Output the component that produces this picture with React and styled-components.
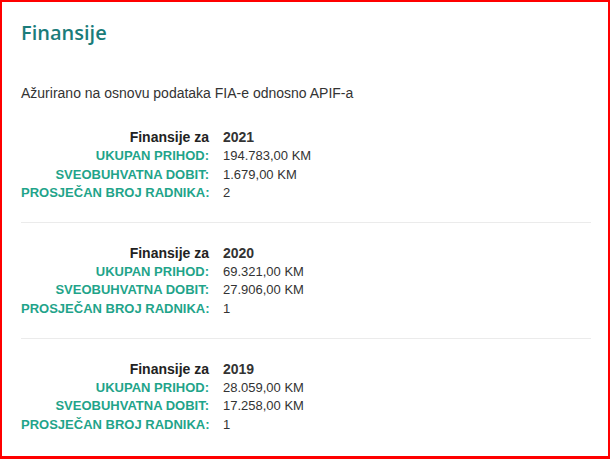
import React from "react";
import styled, { createGlobalStyle } from "styled-components";

const GlobalStyle = createGlobalStyle`
  html, body {
    margin: 0;
    padding: 0;
    background: #ffffff;
  }
  body {
    font-family: "Liberation Sans", Arial, sans-serif;
  }
`;

const Frame = styled.div`
  width: 610px;
  height: 459px;
  box-sizing: border-box;
  border: 2px solid #ff0000;
  border-bottom-width: 3px;
  padding: 17px 17px 0 19px;
  overflow: hidden;
  background: #ffffff;
`;

const Title = styled.h2`
  margin: 0;
  font-family: "Open Sans", sans-serif;
  font-weight: 600;
  font-size: 20px;
  line-height: 28px;
  color: #1a7c7a;
`;

const Note = styled.p`
  margin: 37px 0 18px;
  font-size: 14px;
  line-height: 18px;
  color: #333333;
`;

const Block = styled.div`
  display: grid;
  grid-template-columns: 188px auto;
  grid-auto-rows: 18.7px;
  align-items: center;
  column-gap: 14px;
  padding: ${(p) => (p.first ? "8px" : "21px")} 0 19px;
  border-top: ${(p) => (p.first ? "none" : "1px solid #ebebeb")};
  font-size: 13px;
  line-height: 18px;
`;

const Label = styled.div`
  text-align: right;
  font-weight: 700;
  white-space: nowrap;
  font-size: ${(p) => (p.head ? "14px" : "13px")};
  color: ${(p) => (p.head ? "#222222" : "#1fa48a")};
`;

const Value = styled.div`
  color: #333333;
  font-weight: ${(p) => (p.head ? 700 : 400)};
  font-size: ${(p) => (p.head ? "14px" : "13px")};
  white-space: nowrap;
`;

const years = [
  { year: "2021", prihod: "194.783,00 KM", dobit: "1.679,00 KM", radnici: "2" },
  { year: "2020", prihod: "69.321,00 KM", dobit: "27.906,00 KM", radnici: "1" },
  { year: "2019", prihod: "28.059,00 KM", dobit: "17.258,00 KM", radnici: "1" },
];

const YearBlock = ({ item, first }) => (
  <Block first={first}>
    <Label head>Finansije za</Label>
    <Value head>{item.year}</Value>
    <Label>UKUPAN PRIHOD:</Label>
    <Value>{item.prihod}</Value>
    <Label>SVEOBUHVATNA DOBIT:</Label>
    <Value>{item.dobit}</Value>
    <Label>PROSJEČAN BROJ RADNIKA:</Label>
    <Value>{item.radnici}</Value>
  </Block>
);

const App = () => (
  <>
    <GlobalStyle />
    <Frame>
      <Title>Finansije</Title>
      <Note>Ažurirano na osnovu podataka FIA-e odnosno APIF-a</Note>
      {years.map((item, i) => (
        <YearBlock key={item.year} item={item} first={i === 0} />
      ))}
    </Frame>
  </>
);

export default App;
